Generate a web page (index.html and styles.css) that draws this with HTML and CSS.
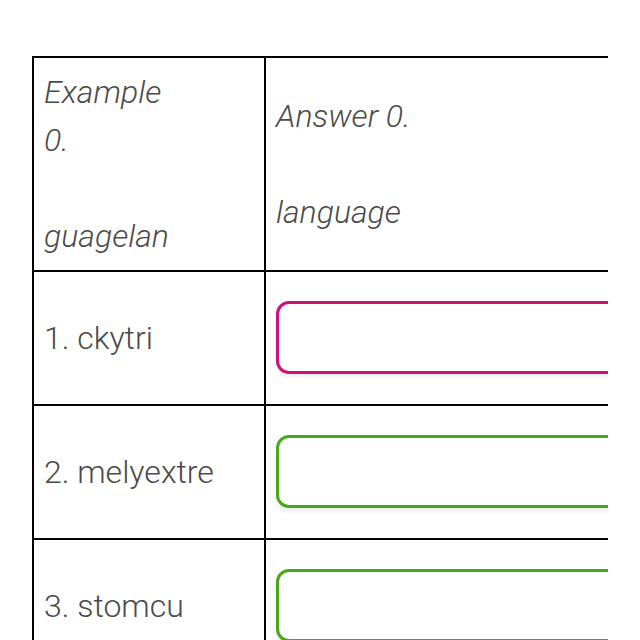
FILE: index.html
```html
<!DOCTYPE html>
<html lang="en">

<head>
    <meta charset="UTF-8">
    <meta name="viewport" content="width=device-width, initial-scale=1.0">
    <title>Word Scramble</title>
    <link rel="stylesheet" href="styles.css">
</head>

<body>
    <div class="scroller">
        <table class="puzzle">
            <colgroup>
                <col class="col-word">
                <col class="col-answer">
            </colgroup>
            <tr class="example">
                <td><em>Example<br>0.<br><br>guagelan</em></td>
                <td><em>Answer 0.<br><br>language</em></td>
            </tr>
            <tr>
                <td>1. ckytri</td>
                <td><input type="text" class="answer wrong"></td>
            </tr>
            <tr>
                <td>2. melyextre</td>
                <td><input type="text" class="answer right"></td>
            </tr>
            <tr>
                <td>3. stomcu</td>
                <td><input type="text" class="answer right"></td>
            </tr>
        </table>
    </div>
</body>

</html>
```

FILE: styles.css
```css
* {
    margin: 0;
    padding: 0;
    box-sizing: border-box;
}

body {
    font-family: Roboto, "Liberation Sans", sans-serif;
    font-weight: 300;
    color: #4a4a4a;
    background-color: #fff;
}

.scroller {
    margin: 56px 32px 0 32px;
    overflow: hidden;
}

.puzzle {
    border-collapse: collapse;
    table-layout: fixed;
    width: 760px;
    font-size: 32px;
    line-height: 48px;
}

.col-word {
    width: 232px;
}

.puzzle td {
    border: 2px solid #000;
    padding: 10px;
    vertical-align: middle;
}

.answer {
    display: block;
    width: 480px;
    height: 73px;
    margin: 19px 0 20px;
    border: 3px solid #ccc;
    border-radius: 13px;
    font: inherit;
    outline: none;
    box-shadow: 0 3px 5px rgba(0, 0, 0, 0.08);
}

.answer.wrong {
    border-color: #cc1278;
}

.answer.right {
    border-color: #4aa71c;
}
```
